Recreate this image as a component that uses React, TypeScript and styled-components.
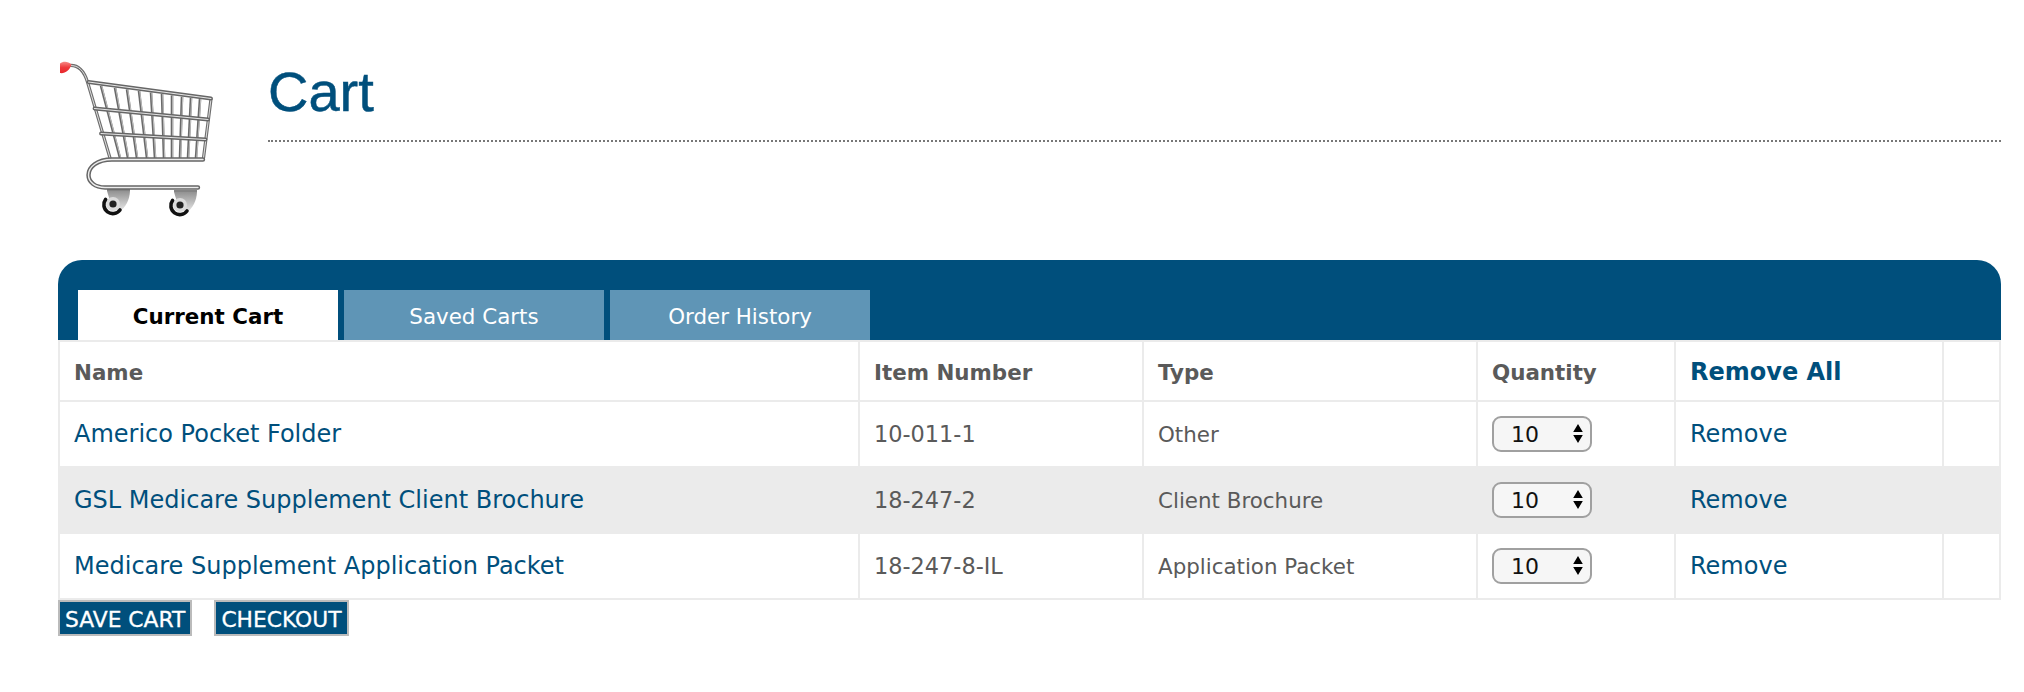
import React from "react"
import styled, { createGlobalStyle } from "styled-components"

const GlobalStyle = createGlobalStyle`
  html, body {
    margin: 0;
    padding: 0;
    background: #fff;
  }
`

const navy = "#004f7c"
const line = "#ebebeb"

const items = [
  { name: "Americo Pocket Folder", number: "10-011-1", type: "Other" },
  { name: "GSL Medicare Supplement Client Brochure", number: "18-247-2", type: "Client Brochure" },
  { name: "Medicare Supplement Application Packet", number: "18-247-8-IL", type: "Application Packet" },
]

const wireTops = [101, 115, 127, 139, 151, 162, 172, 182, 191, 200]
const wireBottoms = [120, 128, 137, 147, 155, 164, 172, 180, 188, 196]

const basketRails = "M88.5 82 L211 98.5 M94.5 108.5 L208 119.5 M101 133.5 L205.5 139.5"
const basketFrame = "M70 65.5 C79 65 84 71 87.5 82 L110 158 M211 99 L203.5 158"
const sled = "M203 159.5 H112 C97 159.5 88.5 167 88.5 175 C88.5 182 95 187.5 105 187.5 H198"

const Wheel = ({ x, y }: { x: number; y: number }) => (
  <g transform={`translate(${x} ${y})`}>
    <path d="M-6 -13 H17 C16.5 -4 13 3 6 8 L-3 -3 Z" fill="url(#bracket)" />
    <path d="M-6 -14 H17" stroke="#666" strokeWidth="1.6" />
    <circle cx="0" cy="0" r="7" fill="#dcdcdc" />
    <path d="M-7.4 -4.6 A8.6 8.6 0 0 0 7 6" fill="none" stroke="#111" strokeWidth="3.6" strokeLinecap="round" />
    <circle cx="0" cy="0" r="3.6" fill="#222" />
  </g>
)

const CartIcon = () => (
  <CartSvg viewBox="58 58 160 160">
    <defs>
      <linearGradient id="bracket" x1="0" y1="0" x2="0" y2="1">
        <stop offset="0" stopColor="#929292" />
        <stop offset="1" stopColor="#ececec" />
      </linearGradient>
      <linearGradient id="grip" x1="0" y1="0" x2="0" y2="1">
        <stop offset="0" stopColor="#f68a86" />
        <stop offset="0.5" stopColor="#ee3a3c" />
        <stop offset="1" stopColor="#e8282c" />
      </linearGradient>
    </defs>
    <g stroke="#6a6a6a" strokeWidth="2.6">
      {wireTops.map((top, i) => (
        <line key={top} x1={top} y1={84 + (top - 88) * 0.135} x2={wireBottoms[i]} y2="158" />
      ))}
    </g>
    <g stroke="#d4d4d4" strokeWidth="0.8">
      {wireTops.map((top, i) => (
        <line key={top} x1={top + 0.7} y1={84 + (top - 88) * 0.135} x2={wireBottoms[i] + 0.7} y2="158" />
      ))}
    </g>
    <g fill="none" strokeLinecap="round">
      <path d={basketFrame} stroke="#6e6e6e" strokeWidth="3.2" />
      <path d={basketFrame} stroke="#dedede" strokeWidth="1" />
      <path d={basketRails} stroke="#666" strokeWidth="3.8" />
      <path d={basketRails} stroke="#e6e6e6" strokeWidth="1.1" />
      <path d={sled} stroke="#666" strokeWidth="4.4" />
      <path d={sled} stroke="#ececec" strokeWidth="1.4" />
    </g>
    <path d="M60 63.5 C63 61 68 61 71.5 64.5 C70 70 64.5 74 60 73 Z" fill="url(#grip)" />
    <Wheel x={113} y={204} />
    <Wheel x={180} y={205} />
  </CartSvg>
)

const Arrows = () => (
  <ArrowSvg viewBox="0 0 10 19">
    <path d="M5 0 L9.8 8 H0.2 Z M0.2 11 H9.8 L5 19 Z" fill="#000" />
  </ArrowSvg>
)

const App: React.FC = () => (
  <>
    <GlobalStyle />
    <Page>
      <Header>
        <CartIcon />
        <TitleBlock>
          <Title>Cart</Title>
        </TitleBlock>
      </Header>
      <Panel>
        <Tabs>
          <Tab $active>Current Cart</Tab>
          <Tab>Saved Carts</Tab>
          <Tab>Order History</Tab>
        </Tabs>
      </Panel>
      <Table>
        <colgroup>
          <col style={{ width: 800 }} />
          <col style={{ width: 284 }} />
          <col style={{ width: 334 }} />
          <col style={{ width: 198 }} />
          <col style={{ width: 268 }} />
          <col />
        </colgroup>
        <thead>
          <tr>
            <Head>Name</Head>
            <Head>Item Number</Head>
            <Head>Type</Head>
            <Head>Quantity</Head>
            <Head>
              <ItemLink href="#">Remove All</ItemLink>
            </Head>
            <Head />
          </tr>
        </thead>
        <tbody>
          {items.map((item, i) => (
            <Row key={item.number} $shaded={i === 1}>
              <Cell>
                <ItemLink href="#">{item.name}</ItemLink>
              </Cell>
              <Cell>
                <ItemNumber>{item.number}</ItemNumber>
              </Cell>
              <Cell>{item.type}</Cell>
              <Cell>
                <QtyWrap>
                  <QtySelect defaultValue="10">
                    <option>10</option>
                    <option>20</option>
                    <option>50</option>
                  </QtySelect>
                  <Arrows />
                </QtyWrap>
              </Cell>
              <Cell>
                <ItemLink href="#">Remove</ItemLink>
              </Cell>
              <Cell />
            </Row>
          ))}
        </tbody>
      </Table>
      <Actions>
        <ActionButton>SAVE CART</ActionButton>
        <ActionButton>CHECKOUT</ActionButton>
      </Actions>
    </Page>
  </>
)

export default App

const Page = styled.div`
  padding: 58px 23px 0 58px;
  font-family: "DejaVu Sans", Verdana, sans-serif;
`

const Header = styled.header`
  display: flex;
  height: 202px;
`

const CartSvg = styled.svg`
  width: 160px;
  height: 160px;
  flex: none;
`

const TitleBlock = styled.div`
  flex: 1;
  margin-left: 50px;
  height: 82px;
  border-bottom: 2px dotted #777;
`

const Title = styled.h1`
  margin: 0;
  font: 400 56px/68px "Liberation Sans", Arial, sans-serif;
  color: ${navy};
  -webkit-text-stroke: 0.5px ${navy};
`

const Panel = styled.div`
  height: 80px;
  box-sizing: border-box;
  padding: 30px 0 0 20px;
  background: ${navy};
  border-radius: 24px 24px 0 0;
`

const Tabs = styled.nav`
  display: flex;
  gap: 6px;
`

const Tab = styled.div<{ $active?: boolean }>`
  width: 260px;
  height: 50px;
  display: flex;
  align-items: center;
  justify-content: center;
  padding-top: 2px;
  box-sizing: border-box;
  font-size: 21.4px;
  font-weight: ${(p) => (p.$active ? 700 : 400)};
  color: ${(p) => (p.$active ? "#000" : "#fff")};
  background: ${(p) => (p.$active ? "#fff" : "#5f95b6")};
`

const Table = styled.table`
  width: 100%;
  table-layout: fixed;
  border-collapse: collapse;
  font-size: 21.4px;
  color: #5a5a5a;
`

const Head = styled.th`
  height: 60px;
  padding: 2px 14px 0;
  box-sizing: border-box;
  border: 2px solid ${line};
  text-align: left;
  font-weight: 700;
`

const Row = styled.tr<{ $shaded?: boolean }>`
  background: ${(p) => (p.$shaded ? line : "#fff")};
`

const Cell = styled.td`
  height: 66px;
  padding: 0 14px;
  box-sizing: border-box;
  border: 2px solid ${line};
`

const ItemNumber = styled.span`
  font-size: 22.4px;
`

const ItemLink = styled.a`
  color: ${navy};
  font-size: 24px;
  text-decoration: none;
`

const QtyWrap = styled.div`
  position: relative;
  width: 100px;
  height: 36px;
`

const QtySelect = styled.select`
  appearance: none;
  width: 100%;
  height: 100%;
  padding: 0 0 0 17px;
  box-sizing: border-box;
  background: #f6f6f6;
  border: 2px solid #a0a0a0;
  border-radius: 9px;
  font: 400 22px "DejaVu Sans", Verdana, sans-serif;
  color: #111;
`

const ArrowSvg = styled.svg`
  position: absolute;
  top: 8px;
  right: 9px;
  width: 10px;
  height: 19px;
  pointer-events: none;
`

const Actions = styled.div`
  display: flex;
  gap: 22px;
`

const ActionButton = styled.button`
  height: 36px;
  padding: 3px 5px 0;
  box-sizing: border-box;
  background: ${navy};
  border: 2px solid #bbb;
  color: #fff;
  font: 400 21.8px "DejaVu Sans", Verdana, sans-serif;
  -webkit-text-stroke: 0.3px #fff;
  white-space: nowrap;
`
